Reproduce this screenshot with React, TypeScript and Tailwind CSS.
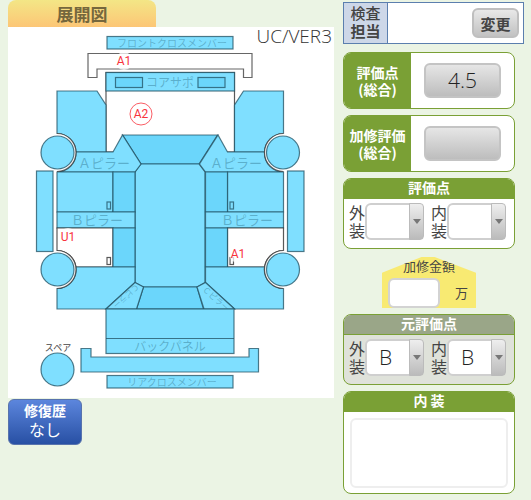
import type { ReactNode } from "react";

const BLUE = "#7fdfff";
const GLASS = "#6bd6fb";

const partNames = [
  { x: 172, y: 47, size: 10, text: "フロントクロスメンバー" },
  { x: 170, y: 87, size: 12, text: "コアサポ" },
  { x: 104, y: 168, size: 13, text: "Ａピラー" },
  { x: 236, y: 168, size: 13, text: "Ａピラー" },
  { x: 97, y: 225, size: 13, text: "Ｂピラー" },
  { x: 247, y: 225, size: 13, text: "Ｂピラー" },
  { x: 170, y: 351, size: 12, text: "バックパネル" },
  { x: 172, y: 386, size: 10, text: "リアクロスメンバー" },
];

const damages = [
  { x: 124, y: 61, code: "A1", circled: false },
  { x: 141, y: 114, code: "A2", circled: true },
  { x: 68, y: 237, code: "U1", circled: false },
  { x: 238, y: 254, code: "A1", circled: false },
];

function BodySide() {
  return (
    <g>
      {/* fender */}
      <path d="M57 91H97L106 105V152H76A19 19 0 0 0 57 133.5Z" fill={BLUE} />
      {/* A pillar */}
      <path d="M57 172A19 19 0 0 0 76 152H113L122.5 135L141 164L135 172Z" fill={BLUE} />
      {/* front door */}
      <path d="M57 172H113V212H57Z" fill={BLUE} />
      <path d="M113 172H135V212H113Z" fill={GLASS} />
      <path d="M57 212H135V228H57Z" fill={BLUE} />
      {/* rear door */}
      <path d="M57 228H113V267H76A19 19 0 0 0 57 250.5Z" fill="#fff" stroke="#222" />
      <path d="M113 228H135V267H113Z" fill={GLASS} />
      {/* quarter panel */}
      <path d="M76 267H135V282.5L106 309H57V288.5A19 19 0 0 0 76 267Z" fill={BLUE} />
      <path d="M135 282.5L143.5 287L136.5 309H106Z" fill={BLUE} />
      {/* door handles */}
      <rect x="107" y="202" width="3.5" height="7" fill="none" />
      <rect x="107" y="257.5" width="3.5" height="7" fill="#fff" stroke="#222" />
      {/* wheels and sill */}
      <path
        d="M57 133.5A19 19 0 0 1 57 171.5M57 250.5A19 19 0 0 1 57 288.5"
        fill="#fff"
        stroke="#333"
      />
      <rect x="36.5" y="171" width="16.5" height="80.5" fill={BLUE} />
      <circle cx="57.5" cy="152.5" r="16.5" fill={BLUE} />
      <circle cx="57.5" cy="269.5" r="16.5" fill={BLUE} />
    </g>
  );
}

function CarDiagram() {
  return (
    <svg viewBox="8 27 326 371" className="block w-full overflow-visible bg-white" role="img">
      <g stroke="#1f4f60" strokeOpacity="0.75" strokeWidth="1.2">
        <rect x="107" y="36.5" width="126" height="12.5" fill={BLUE} />
        <path d="M88 53.5H252V77.5H243.5V69H97V77.5H88Z" fill="#fff" stroke="#333" />
        <rect x="106" y="72.5" width="128.5" height="79.5" fill="#fff" stroke="#222" />
        <rect x="106" y="72.5" width="128.5" height="18.5" fill={BLUE} />
        <rect x="115.5" y="77.5" width="27" height="10" fill={GLASS} />
        <rect x="198" y="77.5" width="27" height="10" fill={GLASS} />

        {/* windshield, roof, rear window */}
        <path d="M122.5 135H217.5L199 164H141Z" fill={GLASS} />
        <path d="M141 164H199L205 172V282.5L197 287H143.5L135 282.5V172Z" fill={BLUE} />
        <path d="M143.5 287H197L203.5 309H136.5Z" fill={GLASS} />

        <BodySide />
        <g transform="translate(340.5 0) scale(-1 1)">
          <BodySide />
        </g>

        <rect x="106" y="309" width="128" height="44.5" fill={BLUE} />
        <path d="M106 338.5H234" />
        <path d="M81 348.5H91V357H249V348.5H258.5V372H81Z" fill={BLUE} />
        <rect x="107" y="375.5" width="126" height="12.5" fill={BLUE} />
        <circle cx="57.5" cy="369.5" r="16.5" fill={BLUE} />
      </g>

      <g
        textAnchor="middle"
        fill="#1f6078"
        fillOpacity="0.38"
        className="font-['Noto_Sans_CJK_JP',sans-serif]"
      >
        {partNames.map((part) => (
          <text key={`${part.x}-${part.y}`} x={part.x} y={part.y} fontSize={part.size}>
            {part.text}
          </text>
        ))}
        <text fontSize="8" transform="translate(124 294) rotate(138)">
          Ｃピラー
        </text>
        <text fontSize="8" transform="translate(214 301) rotate(42)">
          Ｃピラー
        </text>
      </g>

      <text
        x="58"
        y="351"
        fontSize="9"
        textAnchor="middle"
        fill="#444"
        className="font-['Noto_Sans_CJK_JP',sans-serif]"
      >
        スペア
      </text>
      <text
        x="332"
        y="43"
        fontSize="19"
        textAnchor="end"
        fill="#333"
        className="font-['Open_Sans',sans-serif] font-light"
      >
        UC/VER3
      </text>

      <g textAnchor="middle" fill="#f8333c" className="font-[Roboto,sans-serif]">
        {damages.map((damage) => (
          <g key={`${damage.x}-${damage.y}`}>
            <circle
              cx={damage.x}
              cy={damage.y}
              r={damage.circled ? 11 : 9}
              fill="#fff"
              fillOpacity="0.75"
              stroke={damage.circled ? "#f8333c" : "none"}
              strokeWidth="0.8"
            />
            <text x={damage.x} y={damage.y + 4} fontSize="12">
              {damage.code}
            </text>
          </g>
        ))}
      </g>
    </svg>
  );
}

function ScoreRow({ label, value }: { label: string; value: string }) {
  return (
    <section className="flex h-[57px] overflow-hidden rounded-lg border border-[#7aa035] bg-white">
      <h2 className="flex w-[67px] items-center justify-center bg-[#7aa035] text-center text-sm leading-[17px] font-bold text-white">
        <span>
          {label}
          <br />
          (総合)
        </span>
      </h2>
      <div className="flex flex-1 items-center justify-center">
        <button
          type="button"
          aria-label={label}
          className="h-[35px] w-[77px] rounded-md border-2 border-[#c4c4c4] bg-linear-to-b from-[#e6e6e6] to-[#bdbdbd] font-['Open_Sans',sans-serif] text-[21px] leading-none font-light text-[#222]"
        >
          {value}
        </button>
      </div>
    </section>
  );
}

function Card({ title, muted, children }: { title: string; muted?: boolean; children: ReactNode }) {
  return (
    <section
      className={`overflow-hidden rounded-lg border border-[#7aa035] ${muted ? "bg-[#dfe2da]" : "bg-white"}`}
    >
      <h2
        className={`h-5 text-center text-sm leading-[17px] font-bold text-white ${muted ? "border-b border-[#7aa035] bg-[#9aa688]" : "bg-[#7aa035]"}`}
      >
        {title}
      </h2>
      {children}
    </section>
  );
}

function GradeSelect({ label, value }: { label: string; value: string }) {
  return (
    <label className="flex items-start">
      <span className="w-4 text-base leading-[18px] break-all">{label}</span>
      <span className="relative block">
        <select
          defaultValue={value}
          className="block h-[37px] w-[59px] appearance-none rounded-md border-2 border-[#cfcfcf] bg-white pr-4 pl-3 font-['Open_Sans',sans-serif] text-[21px] leading-none font-light text-[#222]"
        >
          <option value=""></option>
          <option value="B">B</option>
        </select>
        <span className="pointer-events-none absolute inset-y-0 right-0 flex w-[15px] items-center justify-center rounded-r-sm border border-[#bbb] bg-linear-to-b from-[#eee] to-[#bbb]">
          <svg viewBox="0 0 8 5" className="h-[5px] w-2">
            <path d="M0 0H8L4 5Z" fill="#777" />
          </svg>
        </span>
      </span>
    </label>
  );
}

function GradeCard({ title, value, muted }: { title: string; value: string; muted?: boolean }) {
  return (
    <Card title={title} muted={muted}>
      <div className="flex justify-between pt-1 pr-2 pb-2 pl-[5px]">
        <GradeSelect label="外装" value={value} />
        <GradeSelect label="内装" value={value} />
      </div>
    </Card>
  );
}

export default function App() {
  return (
    <div className="flex min-h-screen items-start gap-[9px] bg-[#ebf4e4] pr-[7px] pl-2 font-['Noto_Sans_CJK_JP',sans-serif] text-[#444]">
      <main className="min-w-0 flex-1">
        <h1 className="h-[27px] w-[148px] rounded-t-lg bg-linear-to-b from-[#f3e686] to-[#fcc676] text-center text-[17px] leading-[27px] font-bold text-[#75673d]">
          展開図
        </h1>
        <CarDiagram />
        <button
          type="button"
          className="mt-px flex h-[46px] w-[74px] flex-col items-center justify-center rounded-md border border-[#5873ad] bg-linear-to-b from-[#5c86dd] to-[#2850a4] pb-1 text-white"
        >
          <span className="text-sm leading-[18px] font-bold">修復歴</span>
          <span className="text-base leading-5">なし</span>
        </button>
      </main>

      <aside className="flex w-[181px] flex-col gap-[6px] pt-[2px]">
        <div className="mb-[2px] flex h-[42px] border border-[#5b7fae] bg-white">
          <div className="w-[44px] border-r border-[#5b7fae] bg-[#cdd7e8] pt-px text-center text-[15px] leading-[18px] font-medium">
            検査
            <br />
            <b>担当</b>
          </div>
          <div className="flex flex-1 items-center justify-end pr-1">
            <button
              type="button"
              className="h-[30px] w-[47px] rounded-md border-2 border-[#bfbfbf] bg-linear-to-b from-[#e8e8e8] to-[#c2c2c2] text-[15px] leading-none font-bold"
            >
              変更
            </button>
          </div>
        </div>

        <div className="mr-[9px] flex flex-col gap-[6px]">
          <ScoreRow label="評価点" value="4.5" />
          <ScoreRow label="加修評価" value="" />
          <GradeCard title="評価点" value="" />

          <label className="mt-[2px] block h-[51px] w-[94px] self-center bg-[#f8ea72] text-[13px] [clip-path:polygon(0_31%,42%_0,56%_0,100%_31%,100%_100%,0_100%)]">
            <span className="block text-center leading-[18px]">加修金額</span>
            <span className="flex items-center justify-between pt-[3px] pr-2 pl-[6px]">
              <input
                type="text"
                className="h-[30px] w-[52px] rounded-md border-2 border-[#d3d3d3] bg-white px-1"
              />
              <span>万</span>
            </span>
          </label>

          <GradeCard title="元評価点" value="B" muted />

          <Card title="内 装">
            <div className="px-[6px] pt-[6px] pb-[5px]">
              <textarea
                aria-label="内装"
                className="block h-[70px] w-full resize-none rounded-md border-2 border-[#eee] bg-white p-1 text-sm"
              />
            </div>
          </Card>
        </div>
      </aside>
    </div>
  );
}
